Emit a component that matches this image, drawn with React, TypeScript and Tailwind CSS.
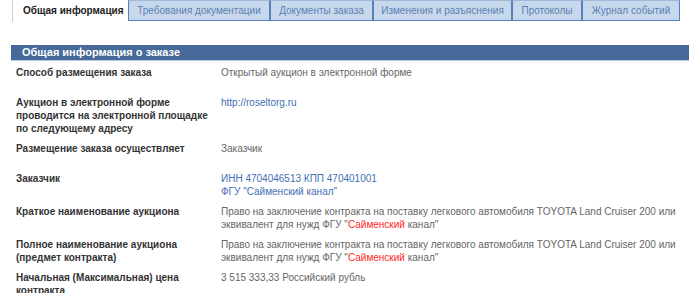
import React from "react";

const tabs = [
  { name: "Требования документации", w: "w-[142px]" },
  { name: "Документы заказа", w: "w-[103px]" },
  { name: "Изменения и разъяснения", w: "w-[139px]" },
  { name: "Протоколы", w: "w-[70px]" },
  { name: "Журнал событий", w: "w-[98px]" },
];

function Row({ label, children }: { label: React.ReactNode; children: React.ReactNode }) {
  return (
    <div className="flex min-h-[30px] pt-[5px] pb-[2px]">
      <div className="w-[210px] flex-none pl-[5px] pr-2 font-bold text-[#333]">{label}</div>
      <div className="flex-1 text-[#666]">{children}</div>
    </div>
  );
}

function Red({ children }: { children: React.ReactNode }) {
  return <span className="text-[#ff1f1f]">{children}</span>;
}

export default function App() {
  return (
    <div className="w-[700px] h-[293px] overflow-hidden whitespace-nowrap bg-white font-['Liberation_Sans',Arial,sans-serif] text-[10px] leading-[13px]">
      {/* tabs */}
      <div className="flex pl-[12px] h-[22px]">
        <div className="w-[116px] h-[22px] flex-none border-l border-[#bcd0e8] bg-white pl-[10px] pt-[4px] font-bold text-[10px] text-[#222]">
          Общая информация
        </div>
        {tabs.map((t) => (
          <div
            key={t.name}
            className={`${t.w} h-[21px] flex-none flex items-center justify-center border-x border-x-[#5580ba] border-t border-t-[#9fb9db] border-b border-b-[#5a84bb] bg-[#c8d8ec] text-[10px] text-[#5c80b0]`}
          >
            {t.name}
          </div>
        ))}
      </div>

      {/* section */}
      <div className="mt-[23px] mx-[11px]">
        <div className="h-[16px] bg-[#46699a] border-b border-[#b9cce4] pl-[11px] font-bold text-[11px] text-white leading-[15px]">
          Общая информация о заказе
        </div>

        <Row label="Способ размещения заказа">Открытый аукцион в электронной форме</Row>
        <Row
          label={
            <>
              Аукцион в электронной форме
              <br />
              проводится на электронной площадке
              <br />
              по следующему адресу
            </>
          }
        >
          <span className="text-[#3f6fb5]">http://roseltorg.ru</span>
        </Row>
        <Row label="Размещение заказа осуществляет">Заказчик</Row>
        <Row label="Заказчик">
          <div className="text-[#3f6fb5]">
            ИНН 4704046513 КПП 470401001
            <br />
            ФГУ "Сайменский канал"
          </div>
        </Row>
        <Row label="Краткое наименование аукциона">
          Право на заключение контракта на поставку легкового автомобиля TOYOTA Land Cruiser 200 или
          <br />
          эквивалент для нужд ФГУ "<Red>Сайменский</Red> канал"
        </Row>
        <Row
          label={
            <>
              Полное наименование аукциона
              <br />
              (предмет контракта)
            </>
          }
        >
          Право на заключение контракта на поставку легкового автомобиля TOYOTA Land Cruiser 200 или
          <br />
          эквивалент для нужд ФГУ "<Red>Сайменский</Red> канал"
        </Row>
        <Row
          label={
            <>
              Начальная (Максимальная) цена
              <br />
              контракта
            </>
          }
        >
          3 515 333,33 Российский рубль
        </Row>
      </div>
    </div>
  );
}
